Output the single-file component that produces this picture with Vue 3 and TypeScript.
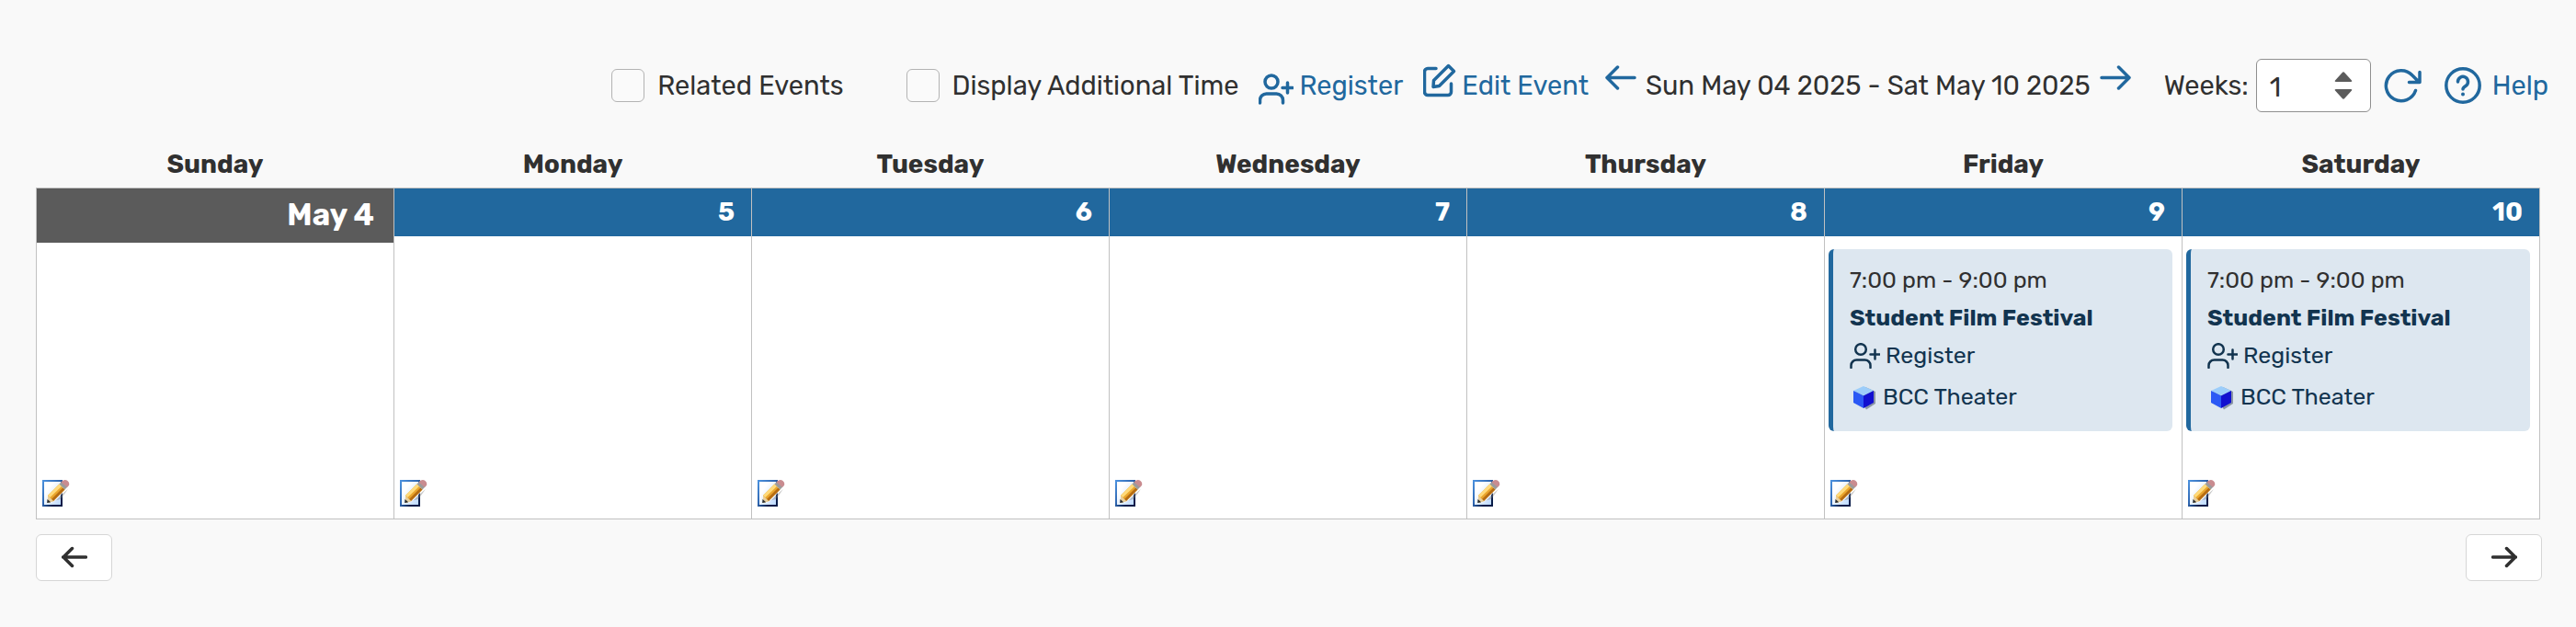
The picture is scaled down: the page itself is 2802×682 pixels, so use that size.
<script setup lang="ts">
import { ref } from 'vue'

interface CalendarEvent {
  time: string
  title: string
  place: string
}

interface Day {
  name: string
  label: string
  today: boolean
  events: CalendarEvent[]
}

const festival: CalendarEvent = {
  time: '7:00 pm - 9:00 pm',
  title: 'Student Film Festival',
  place: 'BCC Theater',
}

const days: Day[] = [
  { name: 'Sunday', label: 'May 4', today: true, events: [] },
  { name: 'Monday', label: '5', today: false, events: [] },
  { name: 'Tuesday', label: '6', today: false, events: [] },
  { name: 'Wednesday', label: '7', today: false, events: [] },
  { name: 'Thursday', label: '8', today: false, events: [] },
  { name: 'Friday', label: '9', today: false, events: [festival] },
  { name: 'Saturday', label: '10', today: false, events: [festival] },
]

const related = ref(false)
const additional = ref(false)
const weeks = ref(1)

function step(delta: number) {
  weeks.value = Math.max(1, weeks.value + delta)
}
</script>

<template>
  <main class="page">
    <header class="toolbar">
      <label class="check related"><input v-model="related" type="checkbox" /><span>Related Events</span></label>
      <label class="check additional"><input v-model="additional" type="checkbox" /><span>Display Additional Time</span></label>
      <a class="link register" href="#register">
        <svg class="icon" width="38" height="48" viewBox="0 0 38 48" aria-hidden="true">
          <circle cx="14" cy="20" r="7" />
          <path d="M1.500 43v-3a7 7 0 0 1 7-7h11a7 7 0 0 1 7 7v3M26 26.500h11M31.500 21v11" />
        </svg>
        <span>Register</span>
      </a>
      <a class="link edit" href="#edit">
        <svg class="icon" width="36" height="48" viewBox="0 0 36 48" aria-hidden="true">
          <path d="M14 5.500H5a3.500 3.500 0 0 0-3.500 3.500v22A3.500 3.500 0 0 0 5 34.500h22a3.500 3.500 0 0 0 3.500-3.500V22" />
          <path d="M11.500 18.500 27.500 2.500l6 6-16 16-6.500 1z" />
        </svg>
        <span>Edit Event</span>
      </a>
      <div class="range">
        <button class="plain" type="button" aria-label="Previous week">
          <svg class="icon" width="34" height="48" viewBox="0 0 34 48" aria-hidden="true"><path d="M32 15.500H2M13.500 4 2 15.500 13.500 27" /></svg>
        </button>
        <span>Sun May 04 2025 - Sat May 10 2025</span>
        <button class="plain" type="button" aria-label="Next week">
          <svg class="icon" width="34" height="48" viewBox="0 0 34 48" aria-hidden="true"><path d="M2 15.500h30M20.500 4 32 15.500 20.500 27" /></svg>
        </button>
      </div>
      <div class="weeks">
        <label for="weeks">Weeks:</label>
        <div class="stepper">
          <input id="weeks" v-model.number="weeks" type="number" min="1" />
          <div class="steps">
            <button class="plain" type="button" aria-label="More weeks" @click="step(1)">
              <svg width="20" height="12" viewBox="0 0 20 12" aria-hidden="true"><path d="M8.500 1.200a2 2 0 0 1 3 0l7.500 8.300q1 1.500-1 1.500H2q-2 0-1-1.500z" fill="#5b5b5b" /></svg>
            </button>
            <button class="plain" type="button" aria-label="Fewer weeks" @click="step(-1)">
              <svg width="20" height="12" viewBox="0 0 20 12" aria-hidden="true"><path d="M8.500 10.800a2 2 0 0 0 3 0L19 2.500Q20 1 18 1H2Q0 1 1 2.500z" fill="#5b5b5b" /></svg>
            </button>
          </div>
        </div>
        <button class="plain" type="button" aria-label="Refresh">
          <svg class="icon" width="42" height="48" viewBox="0 0 42 48" aria-hidden="true"><path d="M34.500 29.500A16.500 16.500 0 1 1 31 13l7.500 7.500M39 9.500v11H27.500" /></svg>
        </button>
      </div>
      <a class="link help" href="#help">
        <svg class="icon" width="40" height="48" viewBox="0 0 40 48" aria-hidden="true">
          <circle cx="20" cy="24" r="18.200" />
          <path d="M14.500 20a5.500 5.500 0 1 1 8.500 4.500c-2 1.300-3 2-3 3.500" />
          <circle cx="20" cy="33.500" r="2" class="dot" />
        </svg>
        <span>Help</span>
      </a>
    </header>

    <table class="calendar">
      <thead>
        <tr><th v-for="day in days" :key="day.name" scope="col">{{ day.name }}</th></tr>
      </thead>
      <tbody>
        <tr class="content">
          <td v-for="day in days" :key="day.name">
            <div class="date" :class="{ today: day.today }">{{ day.label }}</div>
            <article v-for="event in day.events" :key="event.title" class="event">
              <div class="line">{{ event.time }}</div>
              <a class="line title" href="#event">{{ event.title }}</a>
              <a class="line" href="#register">
                <svg class="icon small" width="33" height="28" viewBox="0 0 33 28" aria-hidden="true">
                  <circle cx="12" cy="7" r="5.800" />
                  <path d="M1.500 27v-2.500a6 6 0 0 1 6-6h9a6 6 0 0 1 6 6V27M22.500 12.500h10M27.500 7.500v10" />
                </svg>
                <span>Register</span>
              </a>
              <a class="line place" href="#place">
                <svg class="cube" width="26" height="28" viewBox="0 0 26 28" aria-hidden="true">
                  <path d="m4 8 11-5 11 5v13l-10 6.500z" fill="#26344a" opacity=".45" />
                  <path d="m2 7 11-5 11 5-11 5.500z" fill="#9ccdfa" />
                  <path d="m2 7 11 5.500V26L2 20z" fill="#2b59f5" />
                  <path d="M24 7 13 12.500V26l11-6z" fill="#1110d0" />
                </svg>
                <span>{{ event.place }}</span>
              </a>
            </article>
          </td>
        </tr>
        <tr class="actions">
          <td v-for="day in days" :key="day.name">
            <button class="plain" type="button" :aria-label="'Edit ' + day.name">
              <svg width="30" height="30" viewBox="0 0 30 30" aria-hidden="true">
                <defs>
                  <linearGradient id="paper" x1="0" y1="0" x2="1" y2="1"><stop offset="0.300" stop-color="#fff" /><stop offset="1" stop-color="#b7d6ff" /></linearGradient>
                  <linearGradient id="edge" x1="0" y1="0" x2="1" y2="1"><stop offset="0" stop-color="#4a90dd" /><stop offset="0.450" stop-color="#2f66b0" /><stop offset="0.750" stop-color="#081c48" /></linearGradient>
                </defs>
                <path d="M1 1h20v27H1z" fill="url(#paper)" stroke="url(#edge)" stroke-width="2" />
                <path d="m5 18 3 7 5-1L28 8l-5-7z" fill="#fff" opacity=".8" />
                <path d="m8 24 12-3 8-11-6 5-8 8z" fill="#777" opacity=".4" />
                <path d="M6 17 18.500 4.500l6 6L12 23l-6 2z" fill="#e9a52c" />
                <path d="m6 17 12.500-12.500 2.500 2.500L8.500 19z" fill="#ffda7a" />
                <path d="m10 21 12.500-12.500 2 2L12 23z" fill="#b66c12" />
                <path d="m6 17 6 6-4 1.800-2.500.2z" fill="#e8cf9d" />
                <path d="m5.500 21-.300 4 4-.7z" fill="#252a30" />
                <path d="m18.500 4.500 3-3 6 6-3 3z" fill="#9b9b9b" />
                <path d="m20.500 2.500 1.500-1.500q3-2 5.500 0t1.500 5l-2 2z" fill="#c98c90" />
              </svg>
            </button>
          </td>
        </tr>
      </tbody>
    </table>

    <nav class="pager" aria-label="Weeks">
      <button type="button" aria-label="Previous">
        <svg class="icon" width="28" height="24" viewBox="0 0 28 24" aria-hidden="true"><path d="M26.500 12h-25M11.500 2.500 2 12l9.500 9.500" /></svg>
      </button>
      <button type="button" aria-label="Next">
        <svg class="icon" width="28" height="24" viewBox="0 0 28 24" aria-hidden="true"><path d="M1.500 12h25M16.500 2.500 26 12l-9.500 9.500" /></svg>
      </button>
    </nav>
  </main>
</template>

<style>
body {
  margin: 0;
  background: #f9f9f9;
}
</style>

<style scoped>
.page {
  box-sizing: border-box;
  min-height: 100vh;
  padding: 64px 37px 0 39px;
  background: #f9f9f9;
  color: #303030;
  font-family: Rubik, Inter, sans-serif;
  font-size: 28px;
  line-height: 36px;
}
.toolbar {
  display: flex;
  align-items: center;
  justify-content: flex-end;
  height: 58px;
  margin-right: -7px;
  font-size: 29px;
  white-space: nowrap;
}
.check,
.link,
.range,
.weeks {
  display: flex;
  align-items: center;
}
.check {
  gap: 14px;
}
.check input {
  appearance: none;
  width: 36px;
  height: 36px;
  margin: 0;
  border: 1px solid #b3b3b3;
  border-radius: 6px;
  background: #fafafa;
}
.check input:checked {
  background: #21689e;
}
.additional {
  margin-left: 68px;
}
.link {
  gap: 6px;
  color: #21689e;
  text-decoration: none;
}
.register {
  margin-left: 22px;
}
.edit {
  margin-left: 22px;
}
.range {
  gap: 10px;
  margin-left: 18px;
}
.weeks {
  gap: 8px;
  margin-left: 36px;
}
.weeks > .plain {
  margin-left: 6px;
}
.help {
  gap: 12px;
  margin-left: 24px;
}
.icon {
  display: block;
  flex: none;
  fill: none;
  stroke: currentColor;
  stroke-width: 3.500;
  stroke-linecap: round;
  stroke-linejoin: round;
}
.small {
  stroke-width: 2.500;
}
.dot {
  fill: currentColor;
  stroke: none;
}
.plain {
  display: block;
  padding: 0;
  border: 0;
  background: none;
  color: #21689e;
  cursor: pointer;
}
.plain svg {
  display: block;
}
.stepper {
  box-sizing: border-box;
  display: flex;
  align-items: center;
  justify-content: space-between;
  width: 125px;
  height: 58px;
  padding: 0 19px 0 14px;
  border: 1px solid #8f8f8f;
  border-radius: 6px;
  background: #fff;
}
.stepper input {
  appearance: textfield;
  width: 56px;
  height: 48px;
  padding: 4px 0 0;
  box-sizing: border-box;
  border: 0;
  outline: 0;
  background: none;
  color: inherit;
  font: inherit;
}
.stepper input::-webkit-inner-spin-button {
  appearance: none;
}
.steps {
  display: grid;
  gap: 6px;
}
.calendar {
  width: calc(100% - 2px);
  margin-top: 36px;
  border-collapse: collapse;
  table-layout: fixed;
}
.calendar th {
  height: 46px;
  padding: 0 0 4px;
  box-sizing: border-box;
  font-weight: 700;
}
.calendar td {
  padding: 0;
  border: 1px solid #c1c1c1;
  background: #fff;
  vertical-align: top;
}
.content td {
  height: 317px;
  border-bottom: 0;
}
.actions td {
  height: 42px;
  border-top: 0;
}
.actions .plain {
  margin-left: 6px;
}
.date {
  box-sizing: border-box;
  height: 52px;
  padding: 8px 18px 0 0;
  background: #21689e;
  color: #fff;
  font-weight: 700;
  text-align: right;
}
.today {
  height: 59px;
  padding: 11px 21px 0 0;
  background: #5b5b5b;
  font-size: 33px;
}
.event {
  box-sizing: border-box;
  height: 198px;
  margin: 14px 10px 0 4px;
  padding: 14px 16px 0 18px;
  border-left: 5px solid #21689e;
  border-radius: 6px;
  background: #dde7f0;
  font-size: 25px;
}
.line {
  display: flex;
  align-items: center;
  gap: 6px;
  height: 41px;
}
a.line {
  color: #12344f;
  text-decoration: none;
}
.title {
  font-weight: 700;
}
.place {
  height: 48px;
}
.place .cube {
  margin: 0 2px;
}
.pager {
  display: flex;
  justify-content: space-between;
  margin-top: 16px;
}
.pager button {
  box-sizing: border-box;
  display: flex;
  align-items: center;
  justify-content: center;
  width: 83px;
  height: 51px;
  padding: 0;
  border: 1px solid #d6d6d6;
  border-radius: 6px;
  background: #fff;
  color: #303030;
}
</style>
